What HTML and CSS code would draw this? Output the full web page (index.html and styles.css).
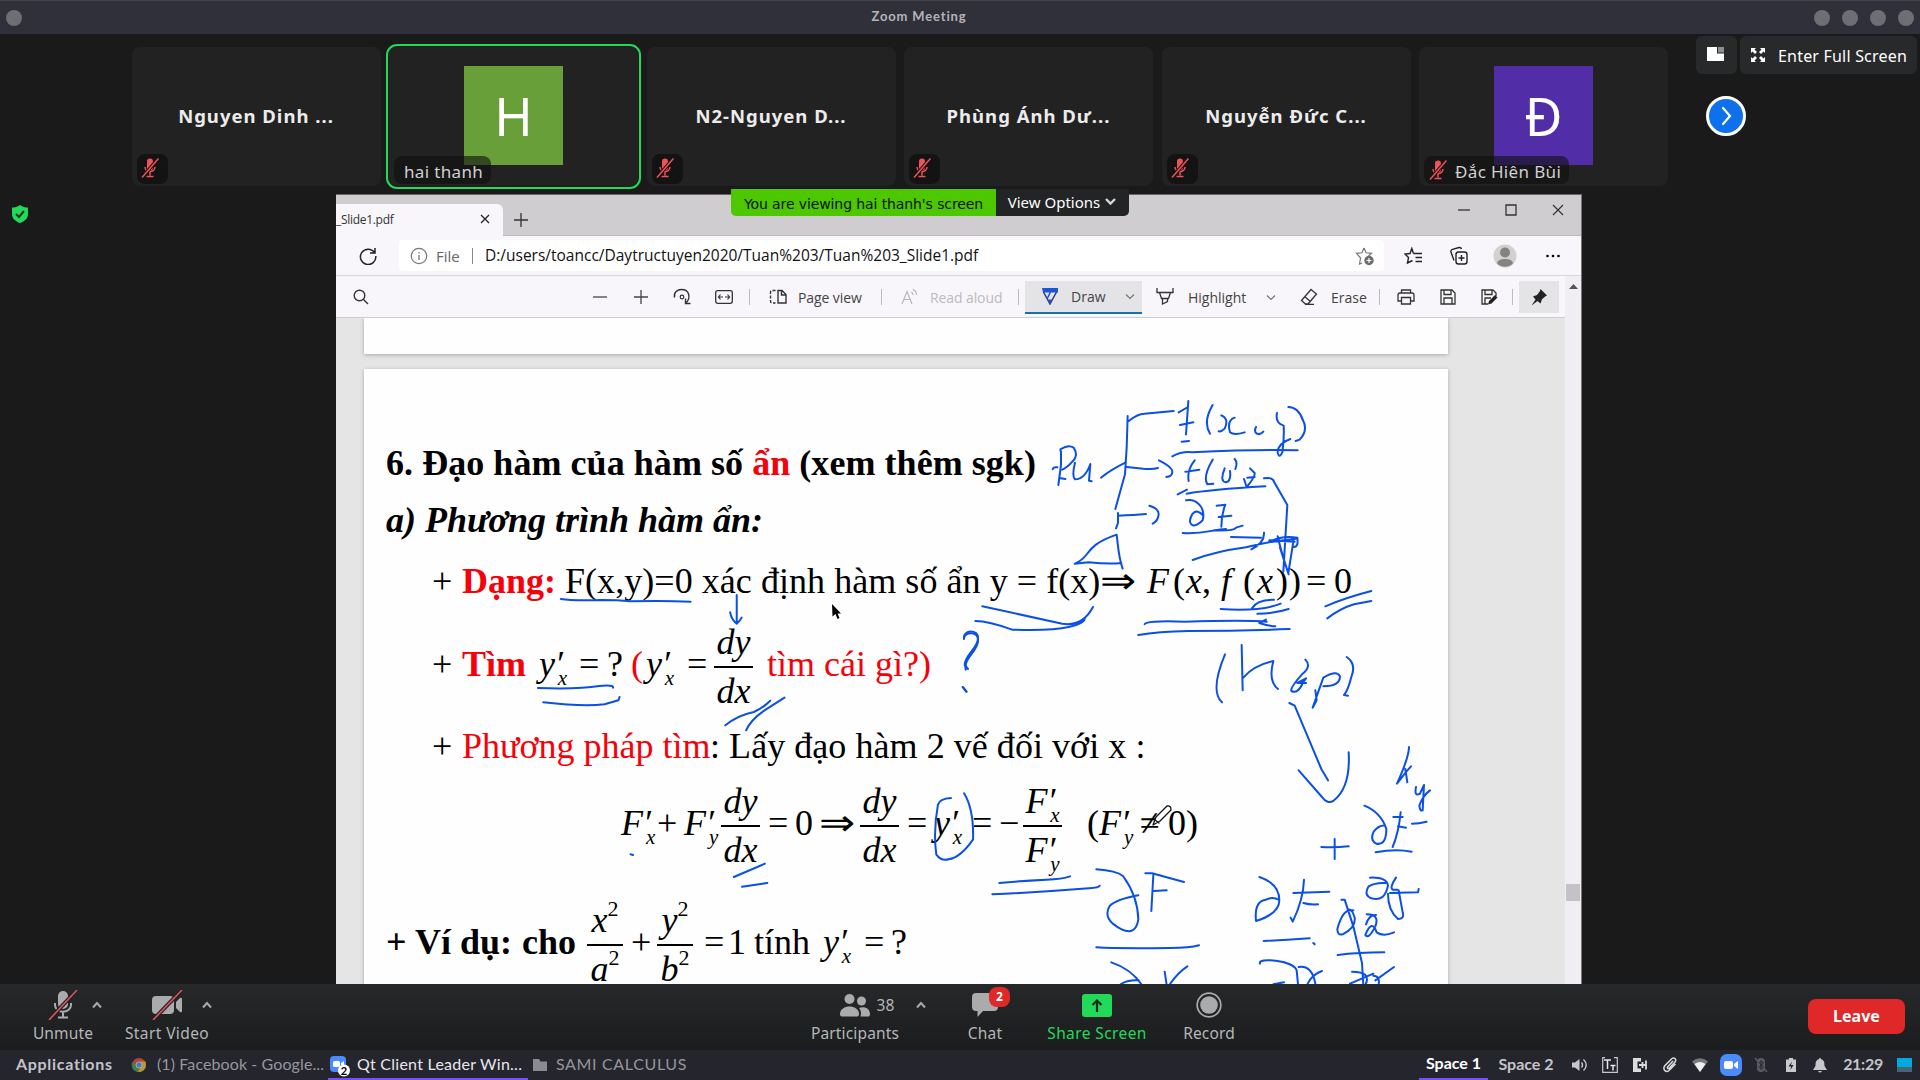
FILE: index.html
```html
<!DOCTYPE html>
<html lang="vi">
<head>
<meta charset="utf-8">
<title>Zoom Meeting</title>
<link rel="stylesheet" href="styles.css">
</head>
<body>
<svg class="defs" width="0" height="0">
  <symbol id="mic-off" viewBox="0 0 18 20">
    <path d="M6 3.500a3 3 0 0 1 6 0v6a3 3 0 0 1-6 0z" fill="#f0525a"/>
    <path d="M4 9c0 6 10 6 10 0M9 13.500v4M5.500 18.600h7" fill="none" stroke="#f0525a" stroke-width="1.500"/>
    <path d="M17.500 .500 1 19.500" stroke="#1a1212" stroke-width="3.500"/>
    <path d="M17.500 .500 1 19.500" stroke="#f0525a" stroke-width="1.500"/>
  </symbol>
  <symbol id="chev" viewBox="0 0 12 12"><path d="M2 4.500 6 8.500 10 4.500" fill="none" stroke="currentColor" stroke-width="1.200"/></symbol>
  <symbol id="caret" viewBox="0 0 12 12"><path d="M2 8.500 6 4 10 8.500" fill="none" stroke="#a9abad" stroke-width="2"/></symbol>
</svg>

<header class="titlebar">
  <span class="dot"></span>
  <span class="title">Zoom Meeting</span>
  <span class="dots"><i class="dot"></i><i class="dot"></i><i class="dot"></i><i class="dot"></i></span>
</header>

<main class="meeting">
  <section class="gallery">
    <div class="tile"><b>Nguyen Dinh ...</b><span class="badge"><svg width="18" height="20"><use href="#mic-off"/></svg></span></div>
    <div class="tile speaking"><span class="avatar green">H</span><span class="badge name">hai thanh</span></div>
    <div class="tile"><b>N2-Nguyen D...</b><span class="badge"><svg width="18" height="20"><use href="#mic-off"/></svg></span></div>
    <div class="tile"><b>Phùng Ánh Dư...</b><span class="badge"><svg width="18" height="20"><use href="#mic-off"/></svg></span></div>
    <div class="tile"><b>Nguyễn Đức C...</b><span class="badge"><svg width="18" height="20"><use href="#mic-off"/></svg></span></div>
    <div class="tile"><span class="avatar purple">Đ</span><span class="badge name wide"><svg width="18" height="20"><use href="#mic-off"/></svg>Đắc Hiên Bùi</span></div>
    <div class="corner">
      <div class="views">
        <button class="ctl small"><svg width="18" height="14"><path d="M0 0h10v6.500h7V14H0z" fill="#fff"/><path d="M11 0h6v5.500h-6z" fill="#8d8f91"/></svg></button>
        <button class="ctl"><svg width="14" height="14" viewBox="0 0 14 14" fill="#fff"><path d="M0 0h5L3.500 1.500 6 4 4 6 1.500 3.500 0 5zM14 0v5l-1.500-1.500L10 6 8 4l2.500-2.500L9 0zM0 14V9l1.500 1.500L4 8l2 2-2.500 2.500L5 14zM14 14H9l1.500-1.500L8 10l2-2 2.500 2.500L14 9z"/></svg>Enter Full Screen</button>
      </div>
      <svg class="next" width="40" height="40" viewBox="0 0 40 40"><circle cx="20" cy="20" r="18.500" fill="#0e71eb" stroke="#fff" stroke-width="3"/><path d="m17 12 7 8-7 8" fill="none" stroke="#fff" stroke-width="2.200" stroke-linecap="round"/></svg>
    </div>
  </section>

  <svg class="shield" width="20" height="20" viewBox="0 0 20 20"><path d="M10 1c3 2 5 2.500 8 2.500V10c0 5-4 7.500-8 9-4-1.500-8-4-8-9V3.500C5 3.500 7 3 10 1z" fill="#23d959"/><path d="m6 10 3 3 5-6" fill="none" stroke="#143a20" stroke-width="2"/></svg>

  <div class="banner"><span class="viewing">You are viewing hai thanh's screen</span><span class="options">View Options<svg width="13" height="13" viewBox="0 0 13 13"><path d="m2 4 4.500 4.500L11 4" fill="none" stroke="#d8d8d8" stroke-width="2.400"/></svg></span></div>

  <section class="browser">
    <div class="tabs">
      <div class="tab"><span>_Slide1.pdf</span><svg width="10" height="10" viewBox="0 0 10 10"><path d="m1 1 8 8M9 1 1 9" stroke="#222" stroke-width="1.300"/></svg></div>
      <svg class="newtab" width="16" height="16" viewBox="0 0 16 16"><path d="M8 1v14M1 8h14" stroke="#333" stroke-width="1.300"/></svg>
      <div class="winctl">
        <svg width="12" height="12"><path d="M0 6h12" stroke="#333" stroke-width="1.300"/></svg>
        <svg width="12" height="12"><path d="M1 1h10v10H1z" fill="none" stroke="#333" stroke-width="1.300"/></svg>
        <svg width="12" height="12"><path d="m1 1 10 10M11 1 1 11" stroke="#333" stroke-width="1.200"/></svg>
      </div>
    </div>

    <div class="address">
      <svg width="18" height="18" viewBox="0 0 18 18"><path d="M15.500 5.500A7.700 7.700 0 1 0 16.800 9M16 1v5h-5" fill="none" stroke="#222" stroke-width="1.500"/></svg>
      <div class="omnibox">
        <svg width="18" height="18" viewBox="0 0 18 18"><circle cx="9" cy="9" r="7.700" fill="none" stroke="#777" stroke-width="1.200"/><path d="M9 8v5M9 5v1.500" stroke="#777" stroke-width="1.300"/></svg>
        <span class="scheme">File</span><span class="bar"></span><span class="url">D:/users/toancc/Daytructuyen2020/Tuan%203/Tuan%203_Slide1.pdf</span>
        <svg width="20" height="20" viewBox="0 0 20 20"><path d="m9 2 2.100 4.800 5.400.500-3 2.700M7 17l-2.500 1L5.600 12 1.500 7.300 7 6.800 9 2" fill="none" stroke="#777" stroke-width="1.200"/><circle cx="14" cy="14.500" r="4.700" fill="#6c6c6c"/><path d="M14 12v5M11.500 14.500h5" stroke="#fff" stroke-width="1.200"/></svg>
      </div>
      <svg width="20" height="18" viewBox="0 0 20 18"><path d="M9.500 6.500 7.800 1.500 6 6.500 1 7l3.500 3.600L3.500 16l5-2.500M9.500 6.500H18M11.500 10.500H18M11.500 14.500H18" fill="none" stroke="#222" stroke-width="1.400"/></svg>
      <svg width="20" height="20" viewBox="0 0 20 20"><rect x="7" y="6" width="11" height="12" rx="2.500" fill="none" stroke="#222" stroke-width="1.400"/><path d="M12.500 9v6M9.500 12h6M5 14.500 2 6q-.500-2 1.500-2.700L10 1.500q2-.300 2.500 1.500" fill="none" stroke="#222" stroke-width="1.400"/></svg>
      <svg width="24" height="24" viewBox="0 0 24 24"><circle cx="12" cy="12" r="11.500" fill="#d2d0d0"/><circle cx="12" cy="8.500" r="5" fill="#858281"/><path d="M4 19c1-5.500 15-5.500 16 0-3 5-13 5-16 0z" fill="#858281"/></svg>
      <svg width="14" height="4"><circle cx="1.500" cy="2" r="1.300"/><circle cx="7" cy="2" r="1.300"/><circle cx="12.500" cy="2" r="1.300"/></svg>
    </div>

    <div class="viewer">
      <div class="document">
        <div class="tools">
          <svg width="16" height="16" viewBox="0 0 16 16"><circle cx="6.500" cy="6.500" r="5.300" fill="none" stroke="#333" stroke-width="1.400"/><path d="m10.500 10.500 4.500 4.500" stroke="#333" stroke-width="1.400"/></svg>
          <span></span>
          <svg width="16" height="16"><path d="M1 8h14" stroke="#444" stroke-width="1.300"/></svg>
          <svg width="16" height="16"><path d="M1 8h14M8 1v14" stroke="#444" stroke-width="1.300"/></svg>
          <svg width="18" height="18" viewBox="0 0 18 18"><path d="M1.500 9.500C.500 4 4.500 1.500 8.500 1.500c8 0 9.500 8 4.500 13.500M12.500 10.500V15.500H17.500" fill="none" stroke="#333" stroke-width="1.400"/><circle cx="9" cy="9" r="1.800" fill="none" stroke="#333" stroke-width="1.200"/></svg>
          <svg width="18" height="14" viewBox="0 0 18 14"><rect x=".700" y=".700" width="16.600" height="12.600" rx="2" fill="none" stroke="#333" stroke-width="1.300"/><path d="M3.500 7H8M10 7h4.500M5.500 4.500 3.500 7l2 2.500M12.500 4.500l2 2.500-2 2.500" fill="none" stroke="#333" stroke-width="1.200"/></svg>
          <i class="sep"></i>
          <svg width="18" height="16" viewBox="0 0 18 16"><path d="M9 1.500h4l4 4v8.500H9zM12.500 1.500V6H17" fill="none" stroke="#333" stroke-width="1.400"/><path d="M6.500 1.500H3q-1.500 0-1.500 2V12q0 2 1.500 2h3.500" fill="none" stroke="#333" stroke-width="1.400" stroke-dasharray="3 1.500"/></svg>
          <span class="pv">Page view</span>
          <i class="sep"></i>
          <svg width="18" height="18" viewBox="0 0 18 18"><path d="M1 16 6 3.500 11 16M3 11.500h6.300M10 4q2 .500 2 3M11.500 1.500q4 1 4 5.500" fill="none" stroke="#b8b6b8" stroke-width="1.200"/></svg>
          <span class="ra">Read aloud</span>
          <i class="sep"></i>
          <div class="draw">
            <svg width="18" height="18" viewBox="0 0 18 18"><path d="M1 1h16v4.500H2z" fill="#1c56d8"/><path d="m2.500 5 6.500 12 6.500-12" fill="none" stroke="#2b3a78" stroke-width="1.500"/><path d="M7 12.500h4L9 17z" fill="#1c56d8"/><path d="m9.500 5-3 6" stroke="#1c56d8" stroke-width="1.500"/></svg>
            <span>Draw</span>
            <svg class="soft" width="12" height="12"><use href="#chev"/></svg>
          </div>
          <svg width="18" height="18" viewBox="0 0 18 18"><path d="M1 0v4.500h16V0M3.500 4.500l2 6h7l2-6M6.500 10.500V16l5-2.500v-3" fill="none" stroke="#333" stroke-width="1.300"/></svg>
          <span class="hl">Highlight</span>
          <svg class="soft" width="12" height="12"><use href="#chev"/></svg>
          <svg width="18" height="18" viewBox="0 0 18 18"><path d="m11 1.500 5.500 4.500-8.500 10H5.500L1.500 12.500zM4.500 8.500l6 5M5 16.300h9" fill="none" stroke="#333" stroke-width="1.300"/></svg>
          <span class="er">Erase</span>
          <i class="sep"></i>
          <svg width="18" height="16" viewBox="0 0 18 16"><path d="M4.500 4V1h9v3M4.500 12H1V6q0-2 2-2h12q2 0 2 2v6h-3.500M4.500 8.500h9V15h-9z" fill="none" stroke="#333" stroke-width="1.300"/></svg>
          <svg width="16" height="16" viewBox="0 0 16 16"><path d="M1 1h11l3 3v11H1zM4 1v4.500h7V1M4 15V9h8v6" fill="none" stroke="#333" stroke-width="1.300"/></svg>
          <svg width="17" height="16" viewBox="0 0 17 16"><path d="M7 15H1V1h11l3 3v3M4 1v4.500h7V1M4 15V9h6" fill="none" stroke="#333" stroke-width="1.300"/><path d="m7 15.500 1-3.500 6-6 2.500 2.500-6 6z" fill="#222"/></svg>
          <i class="sep"></i>
          <div class="pin"><svg width="18" height="18" viewBox="0 0 18 18"><path d="m10.500 1 6.500 6.500-1.500.8-3.500 3-1.500 4.200-3-2.500-6 4.500 4-6L3 8.500l4-1.500 3-4z" fill="#222"/></svg></div>
        </div>

        <div class="pages">
          <div class="sheet previous"></div>
          <article class="sheet slide">
            <p class="line l1"><b>6. Đạo hàm của hàm số <em class="red">ẩn</em> (xem thêm sgk)</b></p>
            <p class="line l2"><b><i>a) Phương trình hàm ẩn:</i></b></p>
            <p class="line l3"><span>+</span><b class="red">Dạng:</b><span class="t3">F(x,y)=0 xác định hàm số ẩn y = f(x)</span><span class="imp">⇒</span><span><i>F</i></span><span>(</span><span><i>x</i>,</span><span><i>f</i></span><span>(</span><span><i>x</i></span><span>)</span><span>)</span><span>=</span><span>0</span></p>
            <p class="line l4"><span>+</span><b class="red">Tìm</b><span><i>y</i><s>′</s><sub>x</sub></span><span>=</span><span>?</span><span class="red">(</span><span><i>y</i><s>′</s><sub>x</sub></span><span>=</span><span class="frac"><i>dy</i><i>dx</i></span><span class="red t4">tìm cái gì?)</span></p>
            <p class="line l5"><span>+</span><span class="red t5">Phương pháp tìm</span><span class="t5b">: Lấy đạo hàm 2 vế đối với x :</span></p>
            <p class="line l6"><span><i>F</i><s>′</s><sub>x</sub></span><span>+</span><span><i>F</i><s>′</s><sub>y</sub></span><span class="frac"><i>dy</i><i>dx</i></span><span>=</span><span>0</span><span class="imp">⇒</span><span class="frac"><i>dy</i><i>dx</i></span><span>=</span><span><i>y</i><s>′</s><sub>x</sub></span><span>=</span><span>−</span><span class="frac"><span><i>F</i><s>′</s><sub>x</sub></span><span><i>F</i><s>′</s><sub>y</sub></span></span><span>(</span><span><i>F</i><s>′</s><sub>y</sub></span><span>≠</span><span>0)</span></p>
            <p class="line l7"><b>+</b><b>Ví dụ:</b><b>cho</b><span class="frac"><span><i>x</i><sup>2</sup></span><span><i>a</i><sup>2</sup></span></span><span>+</span><span class="frac"><span><i>y</i><sup>2</sup></span><span><i>b</i><sup>2</sup></span></span><span>=</span><span>1</span><span>tính</span><span><i>y</i><s>′</s><sub>x</sub></span><span>=</span><span>?</span></p>
          </article>
          <svg class="ink" viewBox="336 318 1229 666" width="1229" height="666">
            <g transform="translate(360 420) scale(.40816 .33333)">
              <path d="M492 534q30 6 100 3 40 0 70 4 80-3 148 1M923 522v86M907 574q2 20 16 34 8-8 12-18M436 801q100 4 150-6 36-4 34 5M449 844q100 14 150 6l34-12 3-10M895 913q30-30 70-40 20-10 40-34M946 928q10-30 45-60l49-38M1480 652c0-20 38-24 34 10-2 30-36 50-30 84M1477 798l8 14"/>
            </g>
            <g transform="translate(360 740) scale(.40816 .33333)">
              <path d="M663 340l6 2M916 408l76-40M936 437l62-11M1448 171q-28 2-32 20-12 80-4 150 12 20 30 14 30-6 60-60 2-90-22-138"/>
            </g>
            <g transform="translate(960 380) scale(.33333)">
              <path d="M278 265q2-8 14-6M303 204q-4 2 0 8l0 40-8 60M303 204q22-14 38-4 16 24-4 42-16 18-30 24M302 292l14 2M345 245q-10 40 0 50 30 0 46-46l-4 50 8 2M423 290q30-24 73-45"/>
              <path d="M503 105 500 200 495 280 466 384M503 122q30-24 50-24l88-8M500 258l50 5q30 2 44-2M597 238q40 20 40 34 0 14-18 16M474 396v30l-6 16M474 404q50-2 84-5M568 374q28 8 28 26-2 20-18 28"/>
              <path d="M656 94 684 78M685 60 678 160M660 132l40-8M665 182l22-2M758 72q-30 50-8 86M784 103q24 10 10 40-10 10-18 8M824 110q-24 8-14 44 12 10 44 0M888 138c-10 20 10 28 22 14M951 96q-6 30 20 38 2 40-4 80-10 20-14 0 0-26 38-40M985 78q30 0 44 40 16 30-10 58l-12 4"/>
              <path d="M637 226q30-16 60-12 200-10 316-6M676 272l42-6M704 238q-24 30-18 62M758 236q-30 50-16 74l18-2M794 262q-16 40 4 42 16-4 12-34M824 234q10 10 2 30M852 294l8 24q26-30 24-42l-14-14M862 290l22-2M653 340l28-14M680 338q70-12 236-22"/>
              <path d="M678 358c30-6 60 20 50 60-30 30-50 10-30-20 10-10 20-8 32 6M770 374l26-3q-12 30-12 66M776 408l38-4M668 456c60 4 90-10 130-12M762 448q60 2 66-8l20-6M813 468l90 2M912 455q2 30-38 50M698 537q70-26 160-38 80-20 150-26M912 292q26-4 30 10l40 70-12 200M928 482q40-20 84-12 4 30-12 28M928 478l76 4M953 466q14 60 32 110l16-100M960 500l26 80"/>
              <path d="M344 548l42-4q60 6 98 2M346 547c50-20 20-50 124-86 6 50 6 70 18 102"/>
              <path d="M67 676l240 52q60 10 92-50M46 720q40 0 110 26 120 4 170-8 50-12 48-26l-16 12M782 684q120 8 180-16M876 682q14-26 66-26M892 698q50 0 94-14M554 730q0-12 120-8 180-6 246 0M918 716l-20 10q30 10 48 10M535 762q60-10 150-12 150 0 304-6M1096 676q60-26 138-46M1102 712q40-30 80-42l52-10"/>
              <path d="M12 774c-4-30 44-30 42-2 0 30-40 50-40 80l10 12M8 918l12 14"/>
              <path d="M795 820q-46 110-9 144M845 792l3 136M850 890q30-36 90-50-16 60 14 84M1036 836q20 20-10 44-36 40-32 50 20 10 34-24l10-14-26 14h26M1066 928l4 30-12 22 32-90q40-24 50-4 0 30-50 30M1160 828q30 20 14 60-10 40-22 54l12 2"/>
            </g>
            <g transform="translate(960 680) scale(.33333)">
              <path d="M988 66l16 8 80 190 20 34M1016 268l70 80q16 24 36 10 50-40 44-144M1347 198q0 30-36 110l28-36 14-16M1336 264l6 40M1368 318q-6 30 12 20l12-26-4 76q-8 4-10-14 10-30 32-46M1213 374q50 20 66 70 0 50-30 44-20-10-8-36 16-20 34-18M1322 394q-6 60-24 104M1300 408h28M1314 436l24 4M1356 428q20 0 44-6M1084 498q40 2 82-2M1124 474v60M1247 514q60-12 108-2"/>
              <path d="M118 606q60-6 140-10 50-2 72-10M97 640q140-6 290-18 30-2 32-8M409 565q60 4 80 20 44 60 46 130-8 50-50 30-60-30-36-70 20-20 86-32M556 577h20l96 26M580 582l-6 108M582 630l38-2M409 799q60 4 220 2 60 0 88-8M454 844q60 20 90 66M482 910q20-14 54-12M614 872l6 40M682 856q-30 20-54 56"/>
              <path d="M898 588q60 20 60 70 0 40-70 62-6-60 30-64 20-10 38 0M1032 596q-2 60-34 126l-6-12M1000 636l108-4M1030 666q20 6 44 4M911 780q50-2 138-8M1060 786l4 4M900 848c-10-20 100-10 110 20l4 42M1016 858q40-6 50 50M1086 870q-30 10-44 40M940 910l32-6"/>
              <path d="M1230 590q50-2 54 24-10 50-50 38-24-10-8-36 20-12 50-10M1308 590q-20 30-10 36l14 0M1284 638q0 50 30 76 20 0 14-20l-12-66M1290 636l84-2 2-10M1144 656h10l26 80 26 110 4 66M1180 688q-30-10-48 56 0 20 16 16 40-20 36-50-8-26-18-24M1220 700q40 0 26 36-20 40-30 26 20-50 34-8 20 14 52 0M1218 730q10-30 30-28M1133 822q60-8 140-8M1176 872q60 0 40 40M1170 908l70-30M1240 884q20 0 16 28M1302 858l-56 40"/>
            </g>
            <path class="pencil" d="m1153 824 3-8 11-11q4-1 4 4l-11 11zM1155 819l4 3"/>
            <path class="pointer" d="m832 603 .500 12.500 3-2.500 2 5 2-1-2-4.500h3.500z"/>
          </svg>
        </div>
      </div>
      <div class="scroll"><svg width="9" height="5"><path d="M0 5h9L4.500 0z" fill="#555"/></svg><i></i></div>
    </div>
  </section>
</main>

<footer class="controls">
  <div class="item c1"><div class="ico"><svg width="30" height="30" viewBox="0 0 30 30"><rect x="10" y="1" width="10" height="18" rx="5" fill="#a9abad"/><path d="M7 13v2c0 9 16 9 16 0v-2M15 21v6M10 27.500h10" fill="none" stroke="#a9abad" stroke-width="2"/><path d="M29 0 1 30" stroke="#222425" stroke-width="4"/><path d="M29 0 1 30" stroke="#e0525a" stroke-width="1.600"/></svg></div><span>Unmute</span></div>
  <svg class="up" width="12" height="12"><use href="#caret"/></svg>
  <div class="item c2"><div class="ico"><svg width="32" height="30" viewBox="0 0 32 30"><rect x="1" y="6" width="22" height="18" rx="4" fill="#a9abad"/><path d="m25 12 4-4q2-1 2 1v12q0 2-2 1l-4-4z" fill="#a9abad"/><path d="M31 0 2 30" stroke="#222425" stroke-width="4"/><path d="M31 0 2 30" stroke="#e0525a" stroke-width="1.600"/></svg></div><span>Start Video</span></div>
  <svg class="up" width="12" height="12"><use href="#caret"/></svg>
  <span class="fill"></span>
  <div class="item c3"><div class="ico"><svg width="30" height="24" viewBox="0 0 30 24" fill="#a9abad"><circle cx="9.500" cy="6" r="5"/><path d="M0 21c0-10 19-10 19 0 0 2-1 2.500-2.500 2.500h-14C1 23.500 0 23 0 21z"/><circle cx="21.500" cy="8" r="4.500"/><path d="M19 15c6-2 11 1 11 6 0 2-1 2.500-2 2.500h-7.500q1.500-5-1.500-8.500z"/></svg><em>38</em></div><span>Participants</span></div>
  <svg class="up" width="12" height="12"><use href="#caret"/></svg>
  <div class="item c4"><div class="ico"><svg width="26" height="24" viewBox="0 0 26 24"><path d="M4 0h18q4 0 4 4v10q0 4-4 4H11l-5.500 6v-6H4q-4 0-4-4V4q0-4 4-4z" fill="#a9abad"/></svg><b class="count">2</b></div><span>Chat</span></div>
  <div class="item c5"><div class="ico"><svg width="30" height="23" viewBox="0 0 30 23"><rect width="30" height="23" rx="3" fill="#23d959"/><path d="M15 18V7M10.500 11 15 6.500l4.500 4.500" fill="none" stroke="#1c2a20" stroke-width="2.200"/></svg></div><span>Share Screen</span></div>
  <div class="item c6"><div class="ico"><svg width="26" height="26" viewBox="0 0 26 26"><circle cx="13" cy="13" r="11.800" fill="none" stroke="#a9abad" stroke-width="1.700"/><circle cx="13" cy="13" r="8.800" fill="#a9abad"/></svg></div><span>Record</span></div>
  <button class="leave">Leave</button>
</footer>

<nav class="taskbar">
  <b class="apps">Applications</b>
  <svg width="16" height="16" viewBox="0 0 16 16"><circle cx="8" cy="8" r="7" fill="#b0453f"/><path d="M1.500 4.800A7 7 0 0 0 7 15l3.500-6H6z" fill="#3f7f4a"/><path d="M15 8A7 7 0 0 1 7 15l4-7-2-3.500h5.500z" fill="#b9983a"/><circle cx="8" cy="8" r="3" fill="#4c76b5" stroke="#aaa"/></svg>
  <span class="task fb">(1) Facebook - Google...</span>
  <div class="active">
    <svg width="22" height="22" viewBox="0 0 22 22"><rect x="2" y="1" width="16" height="16" rx="4" fill="#4a8cff"/><rect x="5" y="6" width="7" height="6" rx="1.500" fill="#fff"/><path d="m13 8 3-2v6l-3-2z" fill="#fff"/><circle cx="16" cy="15.500" r="6" fill="#fff"/><text x="16" y="19.500" text-anchor="middle" class="two">2</text></svg>
    <span class="task qt">Qt Client Leader Win...</span>
  </div>
  <svg width="14" height="14" viewBox="0 0 14 14"><path d="M0 1h6l1.500 2.500H14V13H0z" fill="#8a8a90"/></svg>
  <span class="task sami">SAMI CALCULUS</span>
  <span></span>
  <b class="space on">Space 1</b>
  <b class="space">Space 2</b>
  <svg width="16" height="14" viewBox="0 0 16 14"><path d="M0 4.500h3L7.500 1v12L3 9.500H0z" fill="#c8c8cc"/><path d="M9.500 4.500q2 2.500 0 5M11.500 1.500q5.500 5.500 0 11" fill="none" stroke="#c8c8cc" stroke-width="1.400"/></svg>
  <svg width="16" height="16" viewBox="0 0 16 16"><path d="M3 .700H.700v14.600h14.600V.700H12" fill="none" stroke="#c8c8cc" stroke-width="1.200"/><path d="M2 3h7M5.500 3v9M8.500 8.500h5M11 8.500v5" stroke="#e8e8e8" stroke-width="1.500"/></svg>
  <svg width="16" height="16" viewBox="0 0 16 16"><path d="M1 1h8v3.500H5.500v7H9V15H1z" fill="#dcdcdc"/><path d="M7 8h7M10.500 5v6M14 3.500v9" stroke="#dcdcdc" stroke-width="1.800"/></svg>
  <svg width="16" height="16" viewBox="0 0 16 16"><path d="M11 4 5.500 10q-.500 2 1.500 1.500l6-6.500c2-3-1-5-3-3.500L3 8.500C0 12.500 4 16 7 13.500L13.500 7" fill="none" stroke="#dcdcdc" stroke-width="1.500"/></svg>
  <svg width="16" height="14" viewBox="0 0 16 14"><path d="M0 3.500Q8-3 16 3.500L8 14z" fill="#77777c"/><path d="M2.500 6Q8 2 13.500 6L8 14z" fill="#eee"/></svg>
  <svg width="22" height="22" viewBox="0 0 22 22"><rect width="22" height="22" rx="7" fill="#4a8cff"/><rect x="4" y="7" width="9" height="8" rx="2" fill="#fff"/><path d="m14 10 4-3v8l-4-3z" fill="#fff"/></svg>
  <svg width="14" height="16" viewBox="0 0 14 16"><rect x="3" y="1" width="8" height="14" rx="4" fill="#5a5a60"/><path d="m1 1 12 14" stroke="#5a5a60" stroke-width="1.500"/><path d="m4.500 5 5 5L7 12.500v-9L9.500 6l-5 5" fill="none" stroke="#25252e"/></svg>
  <svg width="10" height="14" viewBox="0 0 10 14"><path d="M0 1.500h3V0h4v1.500h3V14H0z" fill="#c8c8cc"/><path d="M6 3.500 2.500 8.500H5L4.500 12 7.500 7H5z" fill="#25252e"/></svg>
  <svg width="14" height="15" viewBox="0 0 14 15"><path d="M7 0q1 0 1 1.200C11 2 11.500 4 11.500 8L14 12H0l2.500-4C2.500 4 3 2 6 1.200Q6 0 7 0zM5 13h4q-2 3-4 0z" fill="#c8c8cc"/></svg>
  <b class="clock">21:29</b>
  <svg width="15" height="14"><rect width="15" height="9" fill="#00a9e0"/><rect y="9" width="15" height="5" fill="#466574"/></svg>
</nav>
</body>
</html>
```
FILE: styles.css
```css
* { box-sizing: border-box; }
body {
  margin: 0; width: 1920px; height: 1080px; overflow: hidden;
  display: flex; flex-direction: column;
  background: #1a1a1a; color: #fff;
  font-family: "Noto Sans", "Open Sans", sans-serif; font-size: 15px;
}
svg { display: block; flex: none; }
button { border: 0; font: inherit; color: inherit; }
.defs { position: absolute; }

/* window title */
.titlebar {
  height: 34px; flex: none; display: flex; align-items: center; justify-content: space-between;
  padding: 0 6px; background: #30303a; border-top: 1px solid #44444e;
}
.dot { width: 16px; height: 16px; border-radius: 50%; background: #6e6e74; }
.dots { display: flex; gap: 12px; }
.title { font: 700 13px Lato, sans-serif; letter-spacing: .85px; color: #b4b4b8; margin: -4px 0 0 2px; }

/* participants strip */
.meeting { position: relative; height: 950px; flex: none; display: flex; flex-direction: column; }
.gallery { display: flex; gap: 8.5px; height: 160px; flex: none; padding: 13px 0 0 131.5px; }
.tile {
  position: relative; width: 249px; height: 139px; border-radius: 8px; background: #222;
  display: flex; align-items: center; justify-content: center; padding-bottom: 2px;
}
.tile b { font-weight: 700; font-size: 18.5px; letter-spacing: 1px; color: #ececec; }
.speaking { outline: 2px solid #23d959; outline-offset: 1px; }
.avatar { width: 99px; height: 99px; display: flex; align-items: center; justify-content: center; font-size: 52px; }
.green { background: #689f38; }
.purple { background: #512da8; }
.badge {
  position: absolute; left: 5px; bottom: 2px; width: 31px; height: 30px; border-radius: 8px;
  background: rgba(15,15,15,.75); display: flex; align-items: center; padding-left: 4px;
}
.badge svg { width: 18px; height: 20px; margin-top: -3px; }
.name { width: auto; height: 28px; padding: 2px 8px 0 10px; font-size: 17px; letter-spacing: .35px; color: #d0d0d0; gap: 8px; background: rgba(15,15,15,.6); white-space: nowrap; }
.name.wide { padding-left: 5px; }
.corner { margin-left: 19px; }
.views { display: flex; gap: 3px; margin-top: -11px; }
.ctl {
  height: 38px; width: 177px; border-radius: 6px; background: #28292b; padding: 1px 0 0 2px;
  display: flex; align-items: center; justify-content: center; gap: 13px; white-space: nowrap; font-size: 16px; letter-spacing: .2px;
}
.ctl svg { margin-top: -2px; }
.small { width: 41px; padding: 0; }
.next { margin: 22px 0 0 10px; }
.shield { position: absolute; left: 10px; top: 170px; }

/* share banner lies over the shared browser window */
.banner {
  position: absolute; left: 731px; top: 155px; z-index: 2; height: 27px; display: flex;
  border-radius: 0 0 5px 5px; overflow: hidden;
}
.viewing { width: 265px; background: #4cc700; color: #111; text-align: center; font: 14px/30px "DejaVu Sans", sans-serif; letter-spacing: -.1px; }
.options { width: 133px; background: #222426; display: flex; align-items: center; justify-content: center; gap: 4px; line-height: 24px; padding-bottom: 2px; }

/* shared browser */
.browser {
  margin-left: 336px; width: 1246px; height: 790px; flex: none; display: flex; flex-direction: column;
  border-top: 1px solid #666; border-right: 1px solid #777; background: #f8f6fa; color: #333; overflow: hidden;
  font-family: "Open Sans", "Noto Sans", sans-serif;
}
.tabs { height: 41px; display: flex; background: #cfcdcf; padding-top: 9px; border-bottom: 1px solid #bbb; }
.tab { width: 167px; height: 32px; background: #f8f6fa; border-radius: 0 6px 0 0; display: flex; align-items: center; justify-content: space-between; padding: 0 13px 2px 0; font-size: 12px; letter-spacing: -.3px; }
.newtab { margin: 8px 0 0 10px; }
.winctl { margin: 0 17px 0 auto; display: flex; gap: 35px; }
.address { height: 40px; display: grid; grid-template-columns: 63px 985px 59px 31px 62px 33px; align-items: center; border-bottom: 1px solid #d8d6da; }
.address > svg { justify-self: center; }
.omnibox { height: 31px; background: #fff; border-radius: 4px; display: grid; grid-template-columns: 26px 33px 16px 1fr 29px; align-items: center; padding-left: 11px; }
.scheme { color: #666; font-size: 15px; }
.bar { width: 1px; height: 16px; background: #888; margin-left: 3px; }
.url { color: #111; white-space: nowrap; font-size: 15.5px; line-height: 28px; padding-bottom: 1px; }
.viewer { flex: 1; min-height: 0; display: flex; }
.document { width: 1229px; display: flex; flex-direction: column; }
.scroll { width: 16px; background: #f0eef2; display: flex; flex-direction: column; align-items: center; padding-top: 8px; }
.scroll i { width: 14px; height: 17px; background: #c4c2c6; margin-top: 595px; }
.tools {
  height: 42px; flex: none; display: grid; align-items: center; justify-items: center; font-size: 14px; color: #444;
  border-bottom: 1px solid #ccc; padding-top: 1px;
  grid-template-columns: 50px 188px 52px 30px 52px 32px 18px 40px 74px 18px 40px 81px 14px 117px 46px 69px 28px 48px 37px 19px 34px 50px 33px 13px 40px;
}
.tools span { justify-self: start; white-space: nowrap; }
.pv { letter-spacing: -.1px; }
.ra { color: #bbb; letter-spacing: -.1px; }
.er { margin-left: -2px; }
.sep { width: 1px; height: 16px; background: #bbb; }
.soft { color: #777; }
.draw { width: 117px; height: 33px; background: #e4e3e5; border-bottom: 2px solid #1a6fae; display: grid; grid-template-columns: 49px 44px 1fr; align-items: center; }
.draw span { margin-left: -3px; }
.draw svg { justify-self: center; }
.pin { width: 40px; height: 32px; background: #e4e3e5; display: grid; place-items: center; }

.pages { position: relative; height: 667px; overflow: hidden; background: #e5e5e6; padding-left: 28px; }
.sheet { width: 1084px; background: #fefefe; box-shadow: 0 1px 4px #aaa; }
.previous { height: 36px; }
.slide { margin-top: 15px; height: 800px; padding: 66px 0 0 22px; color: #000; font: 36px "Liberation Serif", serif; }
.red { color: #f8000a; font-style: normal; }

/* each line is a grid; every segment of a formula has its own column */
.line { margin: 0; display: grid; align-items: center; align-content: center; justify-content: start; white-space: nowrap; line-height: 46px; }
.l1 { height: 56px; }
.l2 { height: 58px; }
.l3 { height: 64px; padding-left: 46px; grid-template-columns: 30px 103px 535px 47px 26px 13px 35px 22px 14px 19px 13px 17px 28px 20px; }
.l4 { height: 102px; padding-left: 46px; grid-template-columns: 30px 77px 40px 28px 24px 15px 41px 27px 53px 170px; }
.l5 { height: 62px; padding-left: 46px; grid-template-columns: 30px 248px 440px; }
.l6 { height: 92px; padding-left: 235px; grid-template-columns: 36px 27px 37px 47px 27px 24px 41px 47px 27px 38px 27px 24px 64px 12px 41px 28px 36px; }
.l7 { height: 146px; grid-template-columns: 29px 107px 65px 44px 26px 47px 24px 26px 69px 41px 27px 20px; }
.l1 b { letter-spacing: .05px; }
.t3, .t5b { letter-spacing: .05px; }
.imp { transform: scaleX(1.2); transform-origin: left; }
s { text-decoration: none; font-style: italic; }
sub { font-size: 21px; font-style: italic; line-height: 0; vertical-align: -9px; margin-left: -5px; }
sup { font-size: 22px; line-height: 0; vertical-align: 16px; }
.frac { width: 39px; display: flex; flex-direction: column; align-items: center; padding-top: 4px; }
.frac > * { line-height: 46px; }
.frac > :first-child { line-height: 48px; height: 50px; width: 100%; text-align: center; border-bottom: 2px solid #000; }
.l7 .frac { width: 36px; }

.ink { position: absolute; left: 0; top: 1px; }
.ink path { fill: none; stroke: #0a4fe6; stroke-width: 2; stroke-linecap: round; stroke-linejoin: round; vector-effect: non-scaling-stroke; }
.ink .pencil { stroke: #111; stroke-width: 1.3; fill: #fff; }
.ink .pointer { stroke: none; fill: #000; }

/* meeting controls */
.controls { height: 66px; flex: none; display: flex; background: linear-gradient(#262829, #1b1c1d); color: #b4b6b8; position: relative; z-index: 3; }
.item { display: flex; flex-direction: column; align-items: center; white-space: nowrap; font-size: 15.5px; letter-spacing: .15px; }
.ico { height: 42px; display: flex; align-items: center; position: relative; gap: 6px; }
.ico em { font-style: normal; }
.item > span { line-height: 14px; }
.c2 > span { letter-spacing: .4px; }
.up { margin: 15px 0 0; }
.c1 { width: 70px; margin-left: 28px; }
.c1 + .up { margin-left: -7px; }
.c2 { width: 90px; margin-left: 19px; }
.c2 + .up { margin-left: -11px; }
.fill { width: 592px; }
.c3 { width: 100px; }
.c3 .ico { margin-left: 25px; }
.c3 + .up { margin-left: 10px; }
.c4 { width: 60px; margin-left: 28px; }
.c5 { width: 110px; margin-left: 27px; color: #23d959; }
.c5 > span { letter-spacing: .4px; }
.c6 { width: 70px; margin-left: 22px; }
.count { position: absolute; left: 17px; top: 3px; width: 21px; height: 20px; border-radius: 8px; background: #e02828; color: #fff; font-size: 12px; line-height: 20px; text-align: center; }
.leave { margin: 15px 15px 0 auto; width: 97px; height: 35px; border-radius: 8px; background: #e02828; color: #fff; font-weight: 700; font-size: 16px; padding: 0 0 1px; }

/* desktop panel */
.taskbar {
  height: 30px; flex: none; background: #25252e; color: #c4c4c8; font: 16px Lato, sans-serif;
  display: grid; align-items: center; justify-items: center; white-space: nowrap;
  grid-template-columns: 121px 36px 171px 200px 24px 140px 727px 69px 76px 31px 30px 30px 30px 30px 31px 30px 29px 30px 56px 26px;
}
.apps, .task, .space, .clock { padding-bottom: 4px; }
.apps { justify-self: start; margin-left: 16px; letter-spacing: .7px; }
.task { justify-self: start; color: #96969c; }
.fb { letter-spacing: .1px; }
.active { width: 200px; height: 30px; border-bottom: 2px solid #7a4dff; display: flex; align-items: center; gap: 7px; }
.active svg { margin-top: 3px; }
.qt { color: #e8e8ec; letter-spacing: .25px; padding-bottom: 2px; }
.two { font: 700 11px Lato, sans-serif; fill: #000; }
.sami { margin-left: 4px; letter-spacing: .65px; }
.clock { letter-spacing: -.3px; }
.space.on { color: #fff; width: 69px; height: 30px; line-height: 25px; padding: 0; text-align: center; border-bottom: 2px solid #7a4dff; }
```
